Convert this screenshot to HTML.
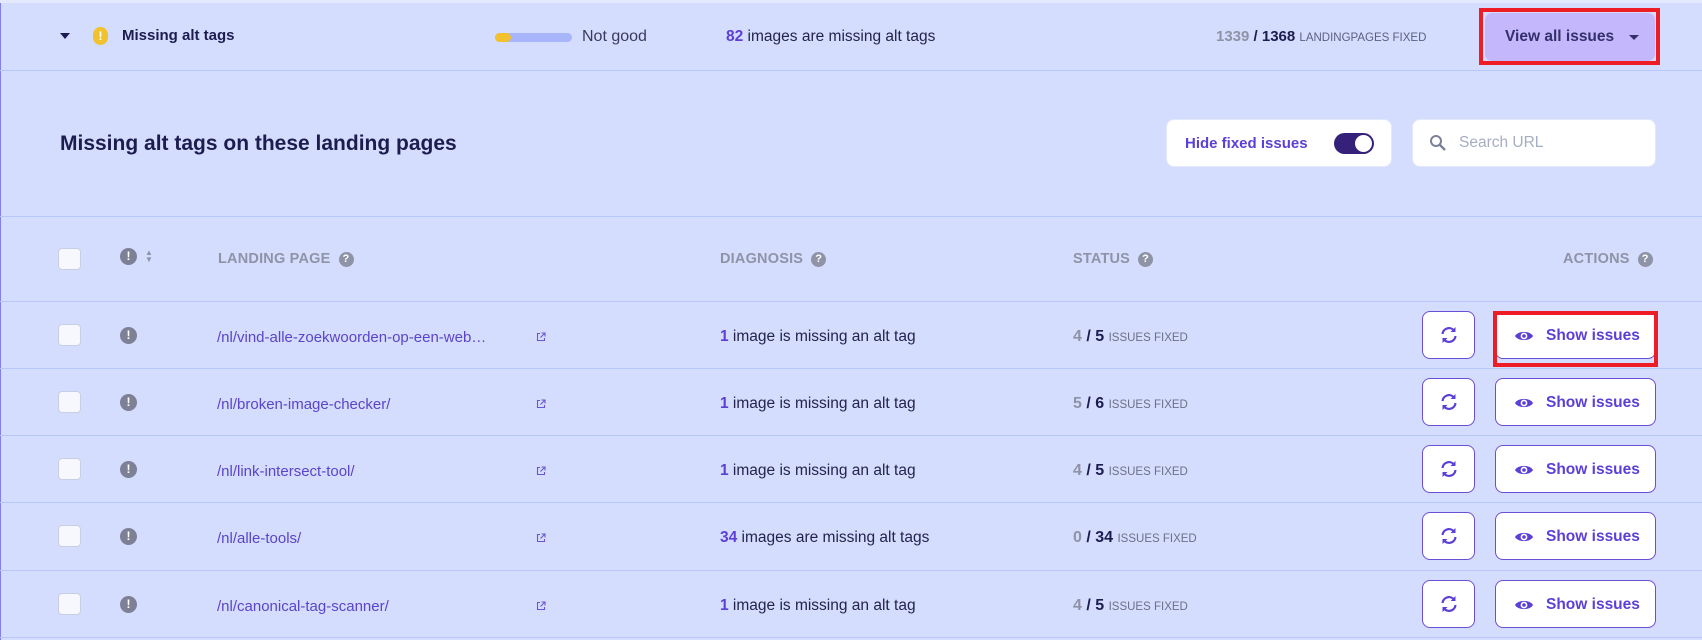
<!DOCTYPE html>
<html><head><meta charset="utf-8"><style>
*{margin:0;padding:0;box-sizing:border-box}
body{width:1702px;height:640px;background:#d5ddfe;font-family:"Liberation Sans",sans-serif;position:relative;overflow:hidden;color:#1c1c4f}
.a{position:absolute;white-space:nowrap}
.hl{position:absolute;left:0;width:1702px;height:1px;background:#b8c6f8}
.cb{position:absolute;left:58px;width:23px;height:22px;background:#f6f8fd;border:1px solid #c9cfe2;border-radius:4px}
.wi{position:absolute;left:120px;width:17px;height:17px;border-radius:50%;background:#7e8195;color:#fff;font-size:12px;font-weight:bold;text-align:center;line-height:17px}
.lnk{font-size:15px;color:#5b44c9}
.diag{font-size:15.5px;color:#23234d}
.diag b{color:#5b3fd6}
.st{font-size:16px;font-weight:bold;color:#1c1c4f}
.st i{font-style:normal;color:#8e93a6}
.st small{font-size:11.5px;font-weight:normal;color:#6c7086}
.rb{position:absolute;left:1422px;width:53px;height:48px;background:#fff;border:1.5px solid #6a4fd6;border-radius:8px}
.sb{position:absolute;left:1495px;width:161px;height:48px;background:#fff;border:1.5px solid #6a4fd6;border-radius:8px;color:#5b3fd6;font-weight:bold;font-size:15.5px}
.th{font-size:14.5px;font-weight:bold;color:#8e93a6;letter-spacing:.2px}
.q{display:inline-block;width:15px;height:15px;border-radius:50%;background:#8e93a6;color:#fff;font-size:11px;text-align:center;line-height:15px;vertical-align:1px;margin-left:8px}
</style></head><body>
<div class="a" style="left:0;top:0;width:1702px;height:3px;background:#e4e9ff"></div>
<div class="a" style="left:0;top:3px;width:1px;height:637px;background:#7f7ff0"></div>
<!-- header row -->
<div class="a" style="left:60px;top:33px;width:0;height:0;border-left:5px solid transparent;border-right:5px solid transparent;border-top:6px solid #1c1c4f"></div>
<div class="a" style="left:93px;top:27px;width:15px;height:18px;border-radius:8px;background:#f2c12e;color:#fff;font-weight:bold;font-size:12px;text-align:center;line-height:18px">!</div>
<div class="a" style="left:122px;top:27px;font-size:15px;font-weight:bold;color:#1c1c4f">Missing alt tags</div>
<div class="a" style="left:495px;top:33px;width:77px;height:9px;border-radius:5px;background:#a9b5fa"></div>
<div class="a" style="left:495px;top:33px;width:16px;height:9px;border-radius:5px;background:#f2c12e"></div>
<div class="a" style="left:582px;top:28px;font-size:16px;color:#3a3a5c">Not good</div>
<div class="a" style="left:726px;top:28px;font-size:15.5px;color:#23234d"><b style="color:#5b3fd6">82</b> images are missing alt tags</div>
<div class="a" style="left:1216px;top:28px;font-size:15px;font-weight:bold;color:#1c1c4f"><span style="color:#8e93a6">1339</span> / 1368 <span style="font-size:11.5px;font-weight:normal;color:#5c6080">LANDINGPAGES FIXED</span></div>
<div class="a" style="left:1485px;top:13px;width:170px;height:48px;background:#c5b7fb;border-radius:7px"></div>
<div class="a" style="left:1505px;top:28px;font-size:15.5px;font-weight:bold;color:#33306b">View all issues</div>
<div class="a" style="left:1629px;top:35px;border-left:5px solid transparent;border-right:5px solid transparent;border-top:5px solid #33306b"></div>
<div class="a" style="left:1479px;top:8px;width:181px;height:57px;border:4px solid #ee1c25"></div>
<div class="hl" style="top:70px"></div>
<!-- title -->
<div class="a" style="left:60px;top:132px;font-size:21px;font-weight:bold;color:#1c1c4f">Missing alt tags on these landing pages</div>
<div class="a" style="left:1166px;top:119px;width:226px;height:48px;background:#fff;border-radius:8px;border:1px solid #e4e8fb"></div>
<div class="a" style="left:1185px;top:135px;font-size:15px;font-weight:bold;color:#5b3fd6">Hide fixed issues</div>
<div class="a" style="left:1334px;top:133px;width:40px;height:21px;border-radius:11px;background:#35217a"></div>
<div class="a" style="left:1355px;top:135px;width:17px;height:17px;border-radius:50%;background:#fff"></div>
<div class="a" style="left:1412px;top:119px;width:244px;height:48px;background:#fff;border-radius:8px;border:1px solid #e4e8fb"></div>
<svg class="a" style="left:1429px;top:134px" width="18" height="18" viewBox="0 0 18 18"><circle cx="7" cy="7" r="5" fill="none" stroke="#7d8196" stroke-width="2"/><line x1="10.5" y1="10.5" x2="16" y2="16" stroke="#7d8196" stroke-width="2.4"/></svg>
<div class="a" style="left:1459px;top:134px;font-size:15.5px;color:#a7adc4">Search URL</div>
<div class="hl" style="top:216px"></div>
<!-- table header -->
<div class="cb" style="top:248px"></div>
<div class="wi" style="top:248px">!</div>
<div class="a" style="left:145px;top:249px;font-size:8px;color:#8e93a6;line-height:7px">▲<br>▼</div>
<div class="a th" style="left:218px;top:251px">LANDING PAGE<span class="q">?</span></div>
<div class="a th" style="left:720px;top:251px">DIAGNOSIS<span class="q">?</span></div>
<div class="a th" style="left:1073px;top:251px">STATUS<span class="q">?</span></div>
<div class="a th" style="left:1563px;top:251px">ACTIONS<span class="q">?</span></div>
<div class="hl" style="top:301px"></div>

<!-- rows -->
<div class="cb" style="top:324px"></div><div class="wi" style="top:327px">!</div>
<div class="a lnk" style="left:217px;top:329px">/nl/vind-alle-zoekwoorden-op-een-web…</div>
<div class="a diag" style="left:720px;top:328px"><b>1</b> image is missing an alt tag</div>
<div class="a st" style="left:1073px;top:328px"><i>4</i> / 5 <small>ISSUES FIXED</small></div>
<div class="hl" style="top:368px"></div>

<div class="cb" style="top:391px"></div><div class="wi" style="top:394px">!</div>
<div class="a lnk" style="left:217px;top:396px">/nl/broken-image-checker/</div>
<div class="a diag" style="left:720px;top:395px"><b>1</b> image is missing an alt tag</div>
<div class="a st" style="left:1073px;top:395px"><i>5</i> / 6 <small>ISSUES FIXED</small></div>
<div class="hl" style="top:435px"></div>

<div class="cb" style="top:458px"></div><div class="wi" style="top:461px">!</div>
<div class="a lnk" style="left:217px;top:463px">/nl/link-intersect-tool/</div>
<div class="a diag" style="left:720px;top:462px"><b>1</b> image is missing an alt tag</div>
<div class="a st" style="left:1073px;top:462px"><i>4</i> / 5 <small>ISSUES FIXED</small></div>
<div class="hl" style="top:502px"></div>

<div class="cb" style="top:525px"></div><div class="wi" style="top:528px">!</div>
<div class="a lnk" style="left:217px;top:530px">/nl/alle-tools/</div>
<div class="a diag" style="left:720px;top:529px"><b>34</b> images are missing alt tags</div>
<div class="a st" style="left:1073px;top:529px"><i>0</i> / 34 <small>ISSUES FIXED</small></div>
<div class="hl" style="top:570px"></div>

<div class="cb" style="top:593px"></div><div class="wi" style="top:596px">!</div>
<div class="a lnk" style="left:217px;top:598px">/nl/canonical-tag-scanner/</div>
<div class="a diag" style="left:720px;top:597px"><b>1</b> image is missing an alt tag</div>
<div class="a st" style="left:1073px;top:597px"><i>4</i> / 5 <small>ISSUES FIXED</small></div>
<div class="hl" style="top:637px"></div>

<!-- ext link icons & buttons -->
<svg width="0" height="0" style="position:absolute"><defs>
<symbol id="ext" viewBox="0 0 10 10"><path d="M4 1.5H1.5v7h7V6M5.5 1h3.5v3.5M9 1 4.5 5.5" fill="none" stroke="#6a55cf" stroke-width="1.1"/></symbol>
<symbol id="ref" viewBox="0 0 20 20"><path d="M3.5 9A6.5 6.5 0 0 1 15 5.5M16.5 11A6.5 6.5 0 0 1 5 14.5" fill="none" stroke="#5b3fd6" stroke-width="2.2"/><path d="M16.5 2v5h-5zM3.5 18v-5h5z" fill="#5b3fd6"/></symbol>
<symbol id="eye" viewBox="0 0 20 14"><path d="M1 7C4 1.5 16 1.5 19 7C16 12.5 4 12.5 1 7z" fill="#5b3fd6"/><circle cx="10" cy="7" r="3.4" fill="#fff"/><circle cx="10" cy="7" r="1.8" fill="#5b3fd6"/></symbol>
</defs></svg>
<svg class="a" style="left:536px;top:332px" width="10" height="10"><use href="#ext"/></svg>
<svg class="a" style="left:536px;top:399px" width="10" height="10"><use href="#ext"/></svg>
<svg class="a" style="left:536px;top:466px" width="10" height="10"><use href="#ext"/></svg>
<svg class="a" style="left:536px;top:533px" width="10" height="10"><use href="#ext"/></svg>
<svg class="a" style="left:536px;top:601px" width="10" height="10"><use href="#ext"/></svg>

<div class="rb" style="top:311px"><svg style="position:absolute;left:16px;top:13px" width="20" height="20"><use href="#ref"/></svg></div>
<div class="sb" style="top:311px"><svg style="position:absolute;left:18px;top:17px" width="20" height="14"><use href="#eye"/></svg><span style="position:absolute;left:50px;top:15px">Show issues</span></div>
<div class="a" style="left:1493px;top:311px;width:165px;height:56px;border:4px solid #ee1c25"></div>

<div class="rb" style="top:378px"><svg style="position:absolute;left:16px;top:13px" width="20" height="20"><use href="#ref"/></svg></div>
<div class="sb" style="top:378px"><svg style="position:absolute;left:18px;top:17px" width="20" height="14"><use href="#eye"/></svg><span style="position:absolute;left:50px;top:15px">Show issues</span></div>
<div class="rb" style="top:445px"><svg style="position:absolute;left:16px;top:13px" width="20" height="20"><use href="#ref"/></svg></div>
<div class="sb" style="top:445px"><svg style="position:absolute;left:18px;top:17px" width="20" height="14"><use href="#eye"/></svg><span style="position:absolute;left:50px;top:15px">Show issues</span></div>
<div class="rb" style="top:512px"><svg style="position:absolute;left:16px;top:13px" width="20" height="20"><use href="#ref"/></svg></div>
<div class="sb" style="top:512px"><svg style="position:absolute;left:18px;top:17px" width="20" height="14"><use href="#eye"/></svg><span style="position:absolute;left:50px;top:15px">Show issues</span></div>
<div class="rb" style="top:580px"><svg style="position:absolute;left:16px;top:13px" width="20" height="20"><use href="#ref"/></svg></div>
<div class="sb" style="top:580px"><svg style="position:absolute;left:18px;top:17px" width="20" height="14"><use href="#eye"/></svg><span style="position:absolute;left:50px;top:15px">Show issues</span></div>
</body></html>
